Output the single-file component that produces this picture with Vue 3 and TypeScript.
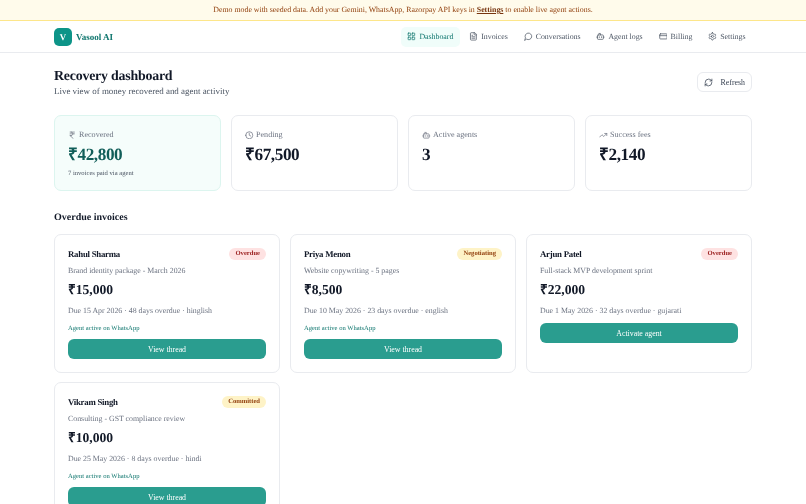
<template>
  <div class="page">
    <div class="banner">
      Demo mode with seeded data. Add your Gemini, WhatsApp, Razorpay API keys in
      <a href="javascript:void(0)" class="banner-link">Settings</a>
      to enable live agent actions.
    </div>

    <header class="topbar">
      <div class="brand">
        <span class="brand-mark">V</span>
        <span class="brand-name">Vasool AI</span>
      </div>
      <nav class="nav">
        <a
          v-for="item in navItems"
          :key="item.label"
          href="javascript:void(0)"
          class="nav-item"
          :class="{ active: item.active }"
        >
          <svg class="icon nav-icon" viewBox="0 0 24 24"><path v-for="d in icons[item.icon]" :key="d" :d="d" /></svg>
          {{ item.label }}
        </a>
      </nav>
    </header>

    <main class="content">
      <div class="head-row">
        <div>
          <h1 class="title">Recovery dashboard</h1>
          <p class="subtitle">Live view of money recovered and agent activity</p>
        </div>
        <button class="refresh-btn">
          <svg class="icon refresh-icon" viewBox="0 0 24 24"><path v-for="d in icons.refresh" :key="d" :d="d" /></svg>
          Refresh
        </button>
      </div>

      <section class="stats">
        <div v-for="stat in stats" :key="stat.label" class="stat" :class="{ highlight: stat.highlight }">
          <div class="stat-label">
            <svg class="icon stat-icon" viewBox="0 0 24 24"><path v-for="d in icons[stat.icon]" :key="d" :d="d" /></svg>
            {{ stat.label }}
          </div>
          <div class="stat-value">{{ stat.value }}</div>
          <div v-if="stat.note" class="stat-note">{{ stat.note }}</div>
        </div>
      </section>

      <h2 class="section-title">Overdue invoices</h2>
      <section class="invoices">
        <article v-for="inv in invoices" :key="inv.name" class="invoice">
          <div class="invoice-top">
            <span class="invoice-name">{{ inv.name }}</span>
            <span class="badge" :class="inv.status.toLowerCase()">{{ inv.status }}</span>
          </div>
          <div class="invoice-desc">{{ inv.desc }}</div>
          <div class="invoice-amount">{{ inv.amount }}</div>
          <div class="invoice-due">{{ inv.due }}</div>
          <div v-if="inv.active" class="invoice-agent">Agent active on WhatsApp</div>
          <button class="invoice-btn">{{ inv.active ? 'View thread' : 'Activate agent' }}</button>
        </article>
      </section>
    </main>
  </div>
</template>

<script setup lang="ts">
interface NavItem { label: string; icon: string; active?: boolean }
interface Stat { label: string; icon: string; value: string; note?: string; highlight?: boolean }
interface Invoice { name: string; status: string; desc: string; amount: string; due: string; active: boolean }

const rect = (x: number, y: number, w: number, h: number, r: number) =>
  `M${x + r} ${y}h${w - 2 * r}a${r} ${r} 0 0 1 ${r} ${r}v${h - 2 * r}a${r} ${r} 0 0 1-${r} ${r}h-${w - 2 * r}a${r} ${r} 0 0 1-${r}-${r}v-${h - 2 * r}a${r} ${r} 0 0 1 ${r}-${r}z`
const circle = (cx: number, cy: number, r: number) =>
  `M${cx - r} ${cy}a${r} ${r} 0 1 0 ${2 * r} 0a${r} ${r} 0 1 0-${2 * r} 0z`

const icons: Record<string, string[]> = {
  grid: [rect(3, 3, 7, 7, 1), rect(14, 3, 7, 7, 1), rect(14, 14, 7, 7, 1), rect(3, 14, 7, 7, 1)],
  file: [
    'M15 2H6a2 2 0 0 0-2 2v16a2 2 0 0 0 2 2h12a2 2 0 0 0 2-2V7Z',
    'M14 2v4a2 2 0 0 0 2 2h4',
    'M10 9H8',
    'M16 13H8',
    'M16 17H8',
  ],
  chat: ['M7.9 20A9 9 0 1 0 4 16.1L2 22Z'],
  bot: ['M12 8V4H8', rect(4, 8, 16, 12, 2), 'M2 14h2', 'M20 14h2', 'M15 13v2', 'M9 13v2'],
  card: [rect(2, 5, 20, 14, 2), 'M2 10h20'],
  gear: [
    'M12.22 2h-.44a2 2 0 0 0-2 2v.18a2 2 0 0 1-1 1.73l-.43.25a2 2 0 0 1-2 0l-.15-.08a2 2 0 0 0-2.73.73l-.22.38a2 2 0 0 0 .73 2.73l.15.1a2 2 0 0 1 1 1.72v.51a2 2 0 0 1-1 1.74l-.15.09a2 2 0 0 0-.73 2.73l.22.38a2 2 0 0 0 2.73.73l.15-.08a2 2 0 0 1 2 0l.43.25a2 2 0 0 1 1 1.73V20a2 2 0 0 0 2 2h.44a2 2 0 0 0 2-2v-.18a2 2 0 0 1 1-1.73l.43-.25a2 2 0 0 1 2 0l.15.08a2 2 0 0 0 2.73-.73l.22-.39a2 2 0 0 0-.73-2.73l-.15-.08a2 2 0 0 1-1-1.74v-.5a2 2 0 0 1 1-1.74l.15-.09a2 2 0 0 0 .73-2.73l-.22-.38a2 2 0 0 0-2.73-.73l-.15.08a2 2 0 0 1-2 0l-.43-.25a2 2 0 0 1-1-1.73V4a2 2 0 0 0-2-2z',
    circle(12, 12, 3),
  ],
  refresh: [
    'M3 12a9 9 0 0 1 9-9 9.75 9.75 0 0 1 6.74 2.74L21 8',
    'M21 3v5h-5',
    'M21 12a9 9 0 0 1-9 9 9.75 9.75 0 0 1-6.74-2.74L3 16',
    'M8 16H3v5',
  ],
  rupee: ['M6 3h12', 'M6 8h12', 'M6 13l8.5 8', 'M6 13h3', 'M9 13c6.667 0 6.667-10 0-10'],
  clock: [circle(12, 12, 10), 'M12 6v6l4 2'],
  trend: ['M22 7l-8.5 8.5-5-5L2 17', 'M16 7h6v6'],
}

const navItems: NavItem[] = [
  { label: 'Dashboard', icon: 'grid', active: true },
  { label: 'Invoices', icon: 'file' },
  { label: 'Conversations', icon: 'chat' },
  { label: 'Agent logs', icon: 'bot' },
  { label: 'Billing', icon: 'card' },
  { label: 'Settings', icon: 'gear' },
]

const stats: Stat[] = [
  { label: 'Recovered', icon: 'rupee', value: '₹42,800', note: '7 invoices paid via agent', highlight: true },
  { label: 'Pending', icon: 'clock', value: '₹67,500' },
  { label: 'Active agents', icon: 'bot', value: '3' },
  { label: 'Success fees', icon: 'trend', value: '₹2,140' },
]

const invoices: Invoice[] = [
  { name: 'Rahul Sharma', status: 'Overdue', desc: 'Brand identity package - March 2026', amount: '₹15,000', due: 'Due 15 Apr 2026 · 48 days overdue · hinglish', active: true },
  { name: 'Priya Menon', status: 'Negotiating', desc: 'Website copywriting - 5 pages', amount: '₹8,500', due: 'Due 10 May 2026 · 23 days overdue · english', active: true },
  { name: 'Arjun Patel', status: 'Overdue', desc: 'Full-stack MVP development sprint', amount: '₹22,000', due: 'Due 1 May 2026 · 32 days overdue · gujarati', active: false },
  { name: 'Vikram Singh', status: 'Committed', desc: 'Consulting - GST compliance review', amount: '₹10,000', due: 'Due 25 May 2026 · 8 days overdue · hindi', active: true },
]
</script>

<style>
html, body { margin: 0; overflow: hidden; }
</style>

<style scoped>
.page {
  min-height: 100vh;
  background: #fff;
  color: #111827;
  font-family: 'Liberation Serif', 'Times New Roman', serif;
  text-rendering: geometricPrecision;
  filter: blur(0.3px);
}

.banner {
  height: 20px;
  line-height: 20px;
  text-align: center;
  font-size: 7.85px;
  color: #92400e;
  background: #fffbeb;
  border-bottom: 1px solid #fde68a;
}
.banner-link { color: #78350f; font-weight: 700; }

.topbar {
  height: 31px;
  padding: 0 54px;
  display: flex;
  align-items: center;
  justify-content: space-between;
  border-bottom: 1px solid #e9ebef;
}
.brand { display: flex; align-items: center; gap: 4px; }
.brand-mark {
  width: 18px;
  height: 18px;
  border-radius: 5px;
  background: #0d9488;
  color: #fff;
  font-size: 8.8px;
  font-weight: 700;
  display: flex;
  align-items: center;
  justify-content: center;
}
.brand-name { font-size: 9px; font-weight: 700; color: #0f766e; }

.nav { display: flex; align-items: center; gap: 2.9px; }
.nav-item {
  display: flex;
  align-items: center;
  gap: 3.2px;
  height: 20px;
  padding: 0 6.5px;
  border-radius: 5px;
  font-size: 7.85px;
  color: #4b5563;
  text-decoration: none;
}
.nav-item.active { background: #f0fdfa; color: #0f766e; }

.icon {
  fill: none;
  stroke: currentColor;
  stroke-width: 2;
  stroke-linecap: round;
  stroke-linejoin: round;
  flex: none;
}
.nav-icon { width: 8.8px; height: 8.8px; }

.content { padding: 15px 54px 0; }

.head-row { display: flex; align-items: flex-start; justify-content: space-between; }
.title { margin: 0; font-size: 13.9px; line-height: 18px; font-weight: 700; letter-spacing: -0.22px; }
.subtitle { margin: 0; font-size: 8.95px; line-height: 10px; color: #4b5563; }

.refresh-btn {
  display: flex;
  align-items: center;
  gap: 8px;
  height: 20px;
  margin-top: 4px;
  padding: 0 6px;
  border: 1px solid #e9ebef;
  border-radius: 6px;
  background: #fff;
  font: inherit;
  font-size: 7.85px;
  color: #374151;
}
.refresh-icon { width: 9px; height: 9px; }

.stats {
  margin-top: 19px;
  display: grid;
  grid-template-columns: repeat(4, 1fr);
  gap: 10px;
}
.stat {
  height: 76px;
  box-sizing: border-box;
  padding: 13px 13px;
  border: 1px solid #e9ebef;
  border-radius: 7px;
  background: #fff;
}
.stat.highlight { background: #f5fdfb; border-color: #dcf5ef; }
.stat-label {
  display: flex;
  align-items: center;
  gap: 2.5px;
  font-size: 8.1px;
  line-height: 12px;
  color: #6b7280;
}
.stat-icon { width: 8.5px; height: 8.5px; }
.stat-value { margin-top: 3px; font-size: 17.2px; line-height: 22px; font-weight: 700; letter-spacing: -0.4px; }
.highlight .stat-value { color: #115e59; }
.stat-note { margin-top: 2px; font-size: 6.6px; line-height: 11px; color: #4b5563; }

.section-title { margin: 20px 0 9px; font-size: 10px; line-height: 14px; font-weight: 700; }

.invoices {
  display: grid;
  grid-template-columns: repeat(3, 1fr);
  gap: 9.5px 10px;
}
.invoice {
  box-sizing: border-box;
  padding: 12px 13px 12.5px;
  border: 1px solid #e9ebef;
  border-radius: 7px;
  background: #fff;
}
.invoice-top { display: flex; align-items: center; justify-content: space-between; height: 14px; }
.invoice-name { font-size: 8.8px; font-weight: 700; letter-spacing: -0.25px; }
.badge {
  height: 12px;
  line-height: 12px;
  padding: 0 6px;
  border-radius: 6px;
  font-size: 6.6px;
  font-weight: 700;
}
.badge.overdue { background: #fee2e2; color: #991b1b; }
.badge.negotiating { background: #fef3c7; color: #92400e; }
.badge.committed { background: #fef3c7; color: #92400e; }
.invoice-desc { margin-top: 3px; font-size: 7.85px; line-height: 13px; color: #6b7280; }
.invoice-amount { margin-top: 3px; font-size: 13.6px; line-height: 19px; font-weight: 700; }
.invoice-due { margin-top: 5px; font-size: 7.85px; line-height: 13px; color: #6b7280; }
.invoice-agent { margin-top: 6px; font-size: 6.6px; line-height: 11px; color: #0f766e; }
.invoice-btn {
  display: block;
  width: 100%;
  height: 20px;
  margin-top: 5px;
  border: none;
  border-radius: 6px;
  background: #2a9d8f;
  color: #fff;
  font: inherit;
  font-size: 7.85px;
}
.invoice-due + .invoice-btn { margin-top: 6px; }
</style>
